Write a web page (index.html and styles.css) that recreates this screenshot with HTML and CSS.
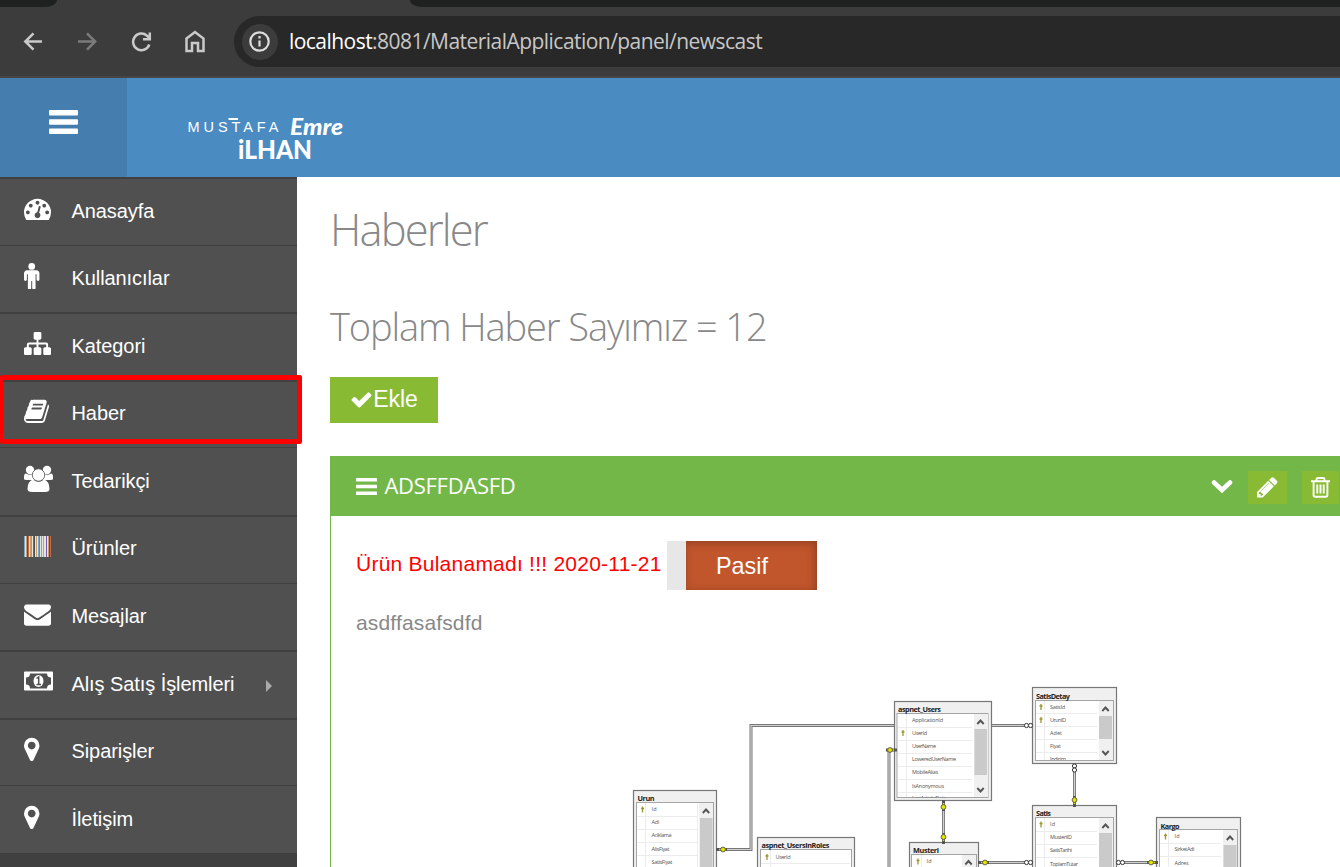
FILE: index.html
```html
<!DOCTYPE html>
<html lang="tr">
<head>
<meta charset="utf-8">
<title>Haberler</title>
<link rel="stylesheet" href="styles.css">
</head>
<body>
<div class="browser">
  <div class="tabstrip"><div class="tab-left"></div><div class="tab-right"></div></div>
  <div class="toolbar">
    <svg class="nav-icons" width="212" height="32" viewBox="0 26 212 32" fill="none" stroke="#c9c9c9" stroke-width="2.500">
      <path d="M42 41.500H26M33.500 33.300L25.300 41.500L33.500 49.700"/>
      <path stroke="#7b7b7b" d="M78 41.500H94M87 33.300L95.200 41.500L87 49.700"/>
      <path d="M149.300 44.500A8.300 8.300 0 1 1 147 35.700L149.500 38.500M149.800 32.500V39.200H143"/>
      <path d="M186.500 38.500L195 32L203.500 38.500V51H198V43H192V51H186.500Z"/>
    </svg>
    <div class="address">
      <span class="info"><svg width="36" height="36" viewBox="0 0 36 36"><circle cx="17.500" cy="17.500" r="9.200" fill="none" stroke="#dedede" stroke-width="2.200"/><path d="M17.500 16.500V22.500M17.500 12V14.500" stroke="#dedede" stroke-width="2.200"/></svg></span>
      <span class="url"><b>localhost</b>:8081/MaterialApplication/panel/newscast</span>
    </div>
  </div>
</div>
<header class="header">
  <div class="menu-toggle"><svg width="29" height="24" viewBox="0 0 29 24" fill="#fff"><rect width="29" height="5.400" rx="1"/><rect y="9.300" width="29" height="5.400" rx="1"/><rect y="18.600" width="29" height="5.400" rx="1"/></svg></div>
  <svg class="logo" width="175" height="60" viewBox="180 105 175 60" fill="#fff">
    <text class="logo-thin" x="187.500" y="132" textLength="91">MUSTAFA</text>
    <rect x="228.500" y="118" width="9.500" height="2"/>
    <text class="logo-script" x="290" y="134.500" textLength="53" lengthAdjust="spacingAndGlyphs">Emre</text>
    <text class="logo-bold" x="238" y="158.500" textLength="74" lengthAdjust="spacingAndGlyphs">iLHAN</text>
  </svg>
</header>
<div class="page">
  <nav class="sidebar">
    <a class="item thick"><svg viewBox="0 0 1792 1792"><path d="M384 1152q0-53-37.500-90.500t-90.500-37.500-90.500 37.500-37.500 90.500 37.500 90.500 90.500 37.500 90.500-37.500 37.500-90.500zm192-448q0-53-37.500-90.500t-90.500-37.500-90.500 37.500-37.500 90.500 37.500 90.500 90.500 37.500 90.500-37.500 37.500-90.500zm428 481l101-382q6-26-7.500-48.500t-38.500-29.500-48 6.500-30 39.500l-101 382q-60 5-107 43.500t-63 98.500q-20 77 20 146t117 89 146-20 89-117q16-60-6-117t-72-91zm660-33q0-53-37.500-90.500t-90.500-37.500-90.500 37.500-37.500 90.500 37.500 90.500 90.500 37.500 90.500-37.500 37.500-90.500zm-640-640q0-53-37.500-90.500t-90.500-37.500-90.500 37.500-37.500 90.500 37.500 90.500 90.500 37.500 90.500-37.500 37.500-90.500zm448 192q0-53-37.500-90.500t-90.500-37.500-90.500 37.500-37.500 90.500 37.500 90.500 90.500 37.500 90.500-37.500 37.500-90.500zm320 448q0 261-141 483-19 29-54 29h-1402q-35 0-54-29-141-221-141-483 0-182 71-348t191-286 286-191 348-71 348 71 286 191 191 286 71 348z"/></svg><span>Anasayfa</span></a>
    <a class="item"><svg viewBox="384 -70 1792 1792"><circle cx="896" cy="224" r="224"/><path d="M1408 672v416q0 40-28 68t-68 28-68-28-28-68v-352h-64v912q0 46-33 79t-79 33-79-33-33-79v-464h-64v464q0 46-33 79t-79 33-79-33-33-79v-912h-64v352q0 40-28 68t-68 28-68-28-28-68v-416q0-80 56-136t136-56h640q80 0 136 56t56 136z"/></svg><span>Kullanıcılar</span></a>
    <a class="item thick"><svg viewBox="0 0 1792 1792"><path d="M1792 1248v320q0 40-28 68t-68 28h-320q-40 0-68-28t-28-68v-320q0-40 28-68t68-28h96v-192h-512v192h96q40 0 68 28t28 68v320q0 40-28 68t-68 28h-320q-40 0-68-28t-28-68v-320q0-40 28-68t68-28h96v-192h-512v192h96q40 0 68 28t28 68v320q0 40-28 68t-68 28h-320q-40 0-68-28t-28-68v-320q0-40 28-68t68-28h96v-192q0-52 38-90t90-38h512v-192h-96q-40 0-68-28t-28-68v-320q0-40 28-68t68-28h320q40 0 68 28t28 68v320q0 40-28 68t-68 28h-96v192h512q52 0 90 38t38 90v192h96q40 0 68 28t28 68z"/></svg><span>Kategori</span></a>
    <a class="item thick active"><svg viewBox="64 -60 1792 1792"><path d="M1703 478q40 57 18 129l-275 906q-19 64-76.500 107.500t-122.500 43.500h-923q-77 0-148.500-53.500t-99.500-131.500q-24-67-2-127 0-4 3-27t4-37q1-8-3-21.500t-3-19.500q2-11 8-21t16.500-23.500 16.500-23.500q23-38 45-91.500t30-91.500q3-10 .5-30t-.5-28q3-11 17-28t17-23q21-36 42-92t25-90q1-9-2.500-32t.5-28q4-13 22-30.500t22-22.500q19-26 42.500-84.500t27.500-96.500q1-8-3-25.500t-2-26.500q2-8 9-18t18-23 17-21q8-12 16.500-30.500t15-35 16-36 19.500-32 26.500-23.500 36-11.500 47.500 5.500l-1 3q38-9 51-9h761q74 0 114 56t18 130l-274 906q-36 119-71.500 153.500t-128.500 34.500h-869q-27 0-38 15-11 16-1 43 24 70 144 70h923q29 0 56-15.500t35-41.500l300-987q7-22 5-57 38 15 59 43zm-1064 2q-4 13 2 22.500t20 9.500h608q13 0 25.500-9.500t16.500-22.500l21-64q4-13-2-22.500t-20-9.500h-608q-13 0-25.500 9.500t-16.500 22.500zm-83 256q-4 13 2 22.500t20 9.500h608q13 0 25.500-9.500t16.500-22.500l21-64q4-13-2-22.500t-20-9.500h-608q-13 0-25.500 9.500t-16.500 22.500z"/></svg><span>Haber</span></a>
    <a class="item"><svg class="wide" viewBox="0 0 29 27"><circle cx="6" cy="5" r="4.200"/><circle cx="23" cy="5" r="4.200"/><path d="M0 14V12Q0 8.500 2 8.500Q6 11 9 8.500L11 15H3Q0 15 0 14ZM29 14V12Q29 8.500 27 8.500Q23 11 20 8.500L18 15H26Q29 15 29 14Z"/><path d="M9 14.500Q14.500 19 20 14.500Q25.500 16 25.500 24Q25.500 27 21 27H8Q3.500 27 3.500 24Q3.500 16 9 14.500Z"/><circle cx="14.500" cy="10" r="6.200" stroke="#505050" stroke-width=".8"/></svg><span>Tedarikçi</span></a>
    <a class="item thick"><svg viewBox="0 -.500 27 27" shape-rendering="crispEdges"><path fill="#e4e4da" d="M0 3h27v21H0z"/><path fill="#505050" d="M10 3h1v21h-1zM25 3h1v21h-1zM3 3h1v21H3z"/><path fill="#c8a06a" d="M2 3h1v21H2zM6 3h1v21H6zM12 3h1v21h-1zM19 3h1v21h-1zM24 3h1v21h-1z"/><path fill="#c56a4c" d="M4 3h1v21H4zM15 3h1v21h-1zM26 3h1v21h-1z"/><path fill="#7659aa" d="M9 3h1v21H9zM22 3h1v21h-1z"/><path fill="#75aacd" d="M0 3h1v21H0zM7 3h1v21H7zM14 3h1v21h-1zM17 3h1v21h-1z"/></svg><span>Ürünler</span></a>
    <a class="item"><svg viewBox="0 -50 1792 1792"><path d="M1792 710v794q0 66-47 113t-113 47h-1472q-66 0-113-47t-47-113v-794q44 49 101 87 362 246 497 345 57 42 92.500 65.500t94.500 48 110 24.500h2q51 0 110-24.500t94.500-48 92.500-65.500q170-123 498-345 57-39 100-87zm0-294q0 79-49 151t-122 123q-376 261-468 325-10 7-42.500 31t-54 38.500-52 32.500-57.500 27-50 9h-2q-23 0-50-9t-57.500-27-52-32.500-54-38.500-42.500-31q-91-64-262-182.500t-205-142.500q-62-42-117-115.500t-55-136.500q0-78 41.500-130t118.500-52h1472q65 0 112.500 47t47.500 113z"/></svg><span>Mesajlar</span></a>
    <a class="item thick"><svg class="wide" viewBox="0 -.500 29 27"><path fill-rule="evenodd" d="M0 4Q0 3 1 3H28Q29 3 29 4V21Q29 22 28 22H1Q0 22 0 21ZM6 5Q6 9 2 9V16Q6 16 6 20H23Q23 16 27 16V9Q23 9 23 5Z"/><ellipse cx="14.500" cy="12.500" rx="5" ry="6"/><path d="M12.500 10L14.700 8.500V16M12.500 16H17" fill="none" stroke="#505050" stroke-width="1.500"/></svg><span>Alış Satış İşlemleri</span><i class="arrow"></i></a>
    <a class="item thick"><svg viewBox="384 -60 1792 1792"><path d="M1152 640q0-106-75-181t-181-75-181 75-75 181 75 181 181 75 181-75 75-181zm256 0q0 109-33 179l-364 774q-16 33-47.500 52t-67.500 19-67.500-19-46.500-52l-365-774q-33-70-33-179 0-212 150-362t362-150 362 150 150 362z"/></svg><span>Siparişler</span></a>
    <a class="item"><svg viewBox="384 -60 1792 1792"><path d="M1152 640q0-106-75-181t-181-75-181 75-75 181 75 181 181 75 181-75 75-181zm256 0q0 109-33 179l-364 774q-16 33-47.500 52t-67.500 19-67.500-19-46.500-52l-365-774q-33-70-33-179 0-212 150-362t362-150 362 150 150 362z"/></svg><span>İletişim</span></a>
  </nav>
  <main class="main">
    <h1>Haberler</h1>
    <h2>Toplam Haber Sayımız = 12</h2>
    <button class="add"><svg width="23" height="23" viewBox="60 0 1672 1792"><path fill="#fff" d="M1671 566q0 40-28 68l-724 724-136 136q-28 28-68 28t-68-28l-136-136-362-362q-28-28-28-68t28-68l136-136q28-28 68-28t68 28l294 295 656-657q28-28 68-28t68 28l136 136q28 28 28 68z"/></svg>Ekle</button>
    <section class="widget">
      <div class="widget-head">
        <svg width="21" height="17" viewBox="0 0 21 17" fill="#fff"><rect width="21" height="3.600" rx=".6"/><rect y="6.700" width="21" height="3.600" rx=".6"/><rect y="13.400" width="21" height="3.600" rx=".6"/></svg>
        <h4>ADSFFDASFD</h4>
        <svg class="chevron" width="22" height="15" viewBox="0 0 22 15"><path d="M3 3.500L11 11L19 3.500" fill="none" stroke="#fff" stroke-width="4.600" stroke-linecap="round"/></svg>
        <span class="tool"><svg width="24" height="24" viewBox="90 60 1700 1792"><path fill="#fff" d="M491 1536l91-91-235-235-91 91v107h128v128h107zm523-928q0-22-22-22-10 0-17 7l-542 542q-7 7-7 17 0 22 22 22 10 0 17-7l542-542q7-7 7-17zm-54-192l416 416-832 832h-416v-416zm683 96q0 53-37 90l-166 166-416-416 166-165q36-38 90-38 53 0 91 38l235 234q37 39 37 91z"/></svg></span>
        <span class="tool trash"><svg width="19" height="21" viewBox="0 0 19 21" fill="none" stroke="#fff" stroke-width="1.900"><path d="M0 4.300H19M5.500 4V2.500Q5.500 1 7 1H12Q13.500 1 13.500 2.500V4M2.600 4.300V18Q2.600 19.800 4.300 19.800H14.700Q16.400 19.800 16.400 18V4.300M6.300 7.500V16.500M9.500 7.500V16.500M12.700 7.500V16.500"/></svg></span>
      </div>
      <div class="widget-body">
        <div class="status"><span class="warn">Ürün Bulanamadı !!! 2020-11-21</span><span class="switch"><span>Pasif</span></span></div>
        <p>asdffasafsdfd</p>
        <svg class="diagram" width="640" height="187" viewBox="620 680 640 187">
          <defs>
            <g id="key"><path d="M0 0H-2M0 0H9" stroke="#555" stroke-width="3"/><path d="M1 0H8" stroke="#dddd20" stroke-width="1.500"/><circle cx="5" r="2.400" fill="#e5e500" stroke="#444" stroke-width=".8"/></g>
            <g id="many" fill="#fff" stroke="#333"><circle cx="-2" r="2.100"/><circle cx="2" r="2.100"/></g>
            <path id="pk" d="M0-3V3M-1.500-1H1.500" stroke="#99992c" stroke-width="1.300"/>
            <path id="up" d="M-3.200 2L0-1.500L3.200 2" fill="none" stroke="#555" stroke-width="1.900"/>
          </defs>
          <g fill="none" stroke="#777" stroke-width="3"><path d="M718 849.500H751V725.500H894M992 725.500H1026M889 867V750M943.500 802V842M1074.500 764V806M980 862.500H1032M1117 862.500H1156"/></g>
          <g fill="none" stroke="#d0d0d0" stroke-width="1.200"><path d="M718 849.500H751V725.500H894M992 725.500H1026M889 867V750M943.500 802V842M1074.500 764V806M980 862.500H1032M1117 862.500H1156"/></g>
          <g fill="#f0f0f0" stroke="#777" stroke-width="1.200">
            <rect x="633.500" y="790.500" width="83" height="90"/><rect x="757.500" y="837.500" width="97" height="60"/><rect x="894.500" y="701.500" width="97" height="99"/><rect x="909.500" y="842.500" width="69" height="60"/><rect x="1032.500" y="687.500" width="84" height="76"/><rect x="1032.500" y="805.500" width="84" height="80"/><rect x="1156.500" y="817.500" width="84" height="80"/>
          </g>
          <g fill="#fff" stroke="#a5a5a5">
            <rect x="636.500" y="802.500" width="77" height="80"/><rect x="760.500" y="849.500" width="91" height="50"/><rect x="897" y="713.500" width="91" height="84"/><rect x="911.500" y="854.500" width="65" height="50"/><rect x="1035.500" y="700.500" width="78" height="60"/><rect x="1035.500" y="817.500" width="78" height="70"/><rect x="1159.500" y="829.500" width="78" height="70"/>
          </g>
          <path stroke="#ececec" d="M645.500 803V867M637 816.500H697M637 829.500H697M637 842.500H697M637 855.500H697M697.500 803V867M770.500 850V867M761 863.500H850M906.500 714V797M898 727.500H972M898 740.500H972M898 753.500H972M898 766.500H972M898 779.500H972M898 792.500H972M921.500 855V867M1044.500 701V760M1036 713.500H1097M1036 726.500H1097M1036 739.500H1097M1036 752.500H1097M1044.500 818V867M1036 831.500H1097M1036 844.500H1097M1036 857.500H1097M1168.500 830V867M1160 843.500H1221M1160 856.500H1221"/>
          <g fill="#f0f0f0"><rect x="699" y="803" width="14" height="64"/><rect x="974" y="714" width="14" height="83"/><rect x="962" y="855" width="14" height="12"/><rect x="1099" y="701" width="14" height="59"/><rect x="1099" y="818" width="14" height="49"/><rect x="1223" y="830" width="14" height="37"/></g>
          <g fill="#cacaca"><rect x="700" y="818" width="12.500" height="49"/><rect x="974.500" y="729" width="12.500" height="46"/><rect x="1099" y="716" width="13" height="23"/><rect x="1099" y="833" width="13" height="34"/><rect x="1223.500" y="845" width="13" height="22"/></g>
          <use href="#up" x="706" y="811"/><use href="#up" x="980.500" y="722"/><use href="#up" x="968.500" y="862.500"/><use href="#up" x="1105.500" y="709"/><use href="#up" x="1105.500" y="826"/><use href="#up" x="1230" y="838"/>
          <use href="#up" transform="translate(980.500 790) scale(1 -1)"/><use href="#up" transform="translate(1105.500 753) scale(1 -1)"/>
          <use href="#pk" x="642.500" y="809.500"/><use href="#pk" x="767" y="857"/><use href="#pk" x="903" y="733"/><use href="#pk" x="918" y="861.500"/><use href="#pk" x="1041" y="707"/><use href="#pk" x="1041" y="720"/><use href="#pk" x="1041" y="824.500"/><use href="#pk" x="1165.500" y="836.500"/>
          <use href="#key" x="718" y="849.500"/><use href="#key" transform="translate(895 750) scale(-1 1)"/><use href="#key" transform="translate(943.500 802) rotate(90)"/><use href="#key" transform="translate(943.500 842) rotate(-90)"/><use href="#key" x="980" y="862.500"/><use href="#key" transform="translate(1074.500 805) rotate(-90)"/><use href="#key" transform="translate(1156 862.500) scale(-1 1)"/>
          <use href="#many" x="1028.500" y="725.500"/><use href="#many" x="1028.500" y="862.500"/><use href="#many" x="1120.500" y="862.500"/><use href="#many" transform="translate(1074.500 768) rotate(90)"/>
          <g class="table-name">
            <text x="637.500" y="801" textLength="17">Urun</text><text x="761.500" y="848" textLength="68">aspnet_UsersInRoles</text><text x="898" y="711.500" textLength="43">aspnet_Users</text><text x="913" y="853" textLength="26">Musteri</text><text x="1036" y="698.500" textLength="34">SatisDetay</text><text x="1036" y="816" textLength="15">Satis</text><text x="1160.500" y="828.500" textLength="19">Kargo</text>
          </g>
          <g class="columns">
            <text x="651.500" y="811" textLength="5">Id</text><text x="651.500" y="824" textLength="8">Adi</text><text x="651.500" y="837" textLength="20">Aciklama</text><text x="651.500" y="850.500" textLength="18">AlisFiyat</text><text x="651.500" y="863.500" textLength="21">SatisFiyat</text>
            <text x="775.500" y="858.500" textLength="15">UserId</text>
            <text x="912" y="722" textLength="31">ApplicationId</text><text x="912" y="735" textLength="15">UserId</text><text x="912" y="748" textLength="24">UserName</text><text x="912" y="761" textLength="44">LoweredUserName</text><text x="912" y="774" textLength="26">MobileAlias</text><text x="912" y="787.500" textLength="32">IsAnonymous</text>
            <svg x="897" y="794" width="76" height="3.500" viewBox="897 794 76 3.500"><text x="912" y="800" textLength="34">LastActivityDate</text></svg>
            <text x="926.500" y="863" textLength="5">Id</text>
            <text x="1050" y="709" textLength="15">SatisId</text><text x="1050" y="722" textLength="16">UrunID</text><text x="1050" y="735" textLength="12">Adet</text><text x="1050" y="748" textLength="11">Fiyat</text><svg x="1036" y="755" width="60" height="5" viewBox="1036 755 60 5"><text x="1050" y="761" textLength="16">Indirim</text></svg>
            <text x="1050" y="826" textLength="5">Id</text><text x="1050" y="839" textLength="22">MusteriID</text><text x="1050" y="852" textLength="22">SatisTarihi</text><text x="1050" y="865.500" textLength="28">ToplamTutar</text>
            <text x="1174.500" y="838" textLength="5">Id</text><text x="1174.500" y="851" textLength="20">SirketAdi</text><text x="1174.500" y="864.500" textLength="14">Adres</text>
          </g>
        </svg>
      </div>
    </section>
  </main>
</div>
</body>
</html>
```
FILE: styles.css
```css
*, *::before, *::after { box-sizing: border-box; }
body { margin: 0; width: 1340px; height: 867px; overflow: hidden; background: #fff; font-family: "Liberation Sans", Arial, sans-serif; }
svg { display: block; flex: none; }
.browser { height: 78px; background: #3c3c3c; border-bottom: 2px solid #474645; }
.tabstrip { height: 7px; display: flex; justify-content: space-between; }
.tab-left { width: 57px; background: #1f2120; border-bottom-right-radius: 12px 7px; }
.tab-right { width: 930px; background: #1f2120; border-bottom-left-radius: 12px 7px; }
.toolbar { height: 69px; display: flex; align-items: center; }
.nav-icons { margin-right: 22px; }
.address { flex: 1; height: 51px; background: #282828; border-radius: 26px 0 0 26px; display: flex; align-items: center; padding-left: 8px; }
.info { width: 36px; height: 36px; border-radius: 50%; background: #3c3c3c; margin-right: 11px; }
.url { font: 21px/30px "Open Sans", "Noto Sans", sans-serif; color: #c7c7c7; white-space: nowrap; letter-spacing: -0.540px; margin-top: -2px; }
.url b { font-weight: 400; color: #fff; }
.header { height: 99px; background: #4a8bc2; display: flex; }
.menu-toggle { width: 127px; background: #447dae; padding: 32px 49px; }
.logo { margin: 27px 0 0 53px; }
.logo-thin { font: 14.500px "Liberation Sans", sans-serif; }
.logo-script { font: italic 900 23px Lato, sans-serif; }
.logo-bold { font: 900 27px Lato, sans-serif; }
.page { height: 690px; display: flex; }
.sidebar { width: 297px; background: #404040; flex: none; }
.item { position: relative; height: 67.6px; display: flex; align-items: flex-start; padding: 16.500px 0 0 24px; background: #505050; border-top: 1px solid #404040; color: #fff; font-size: 20px; }
.item.thick { border-top-width: 2px; padding-top: 15.500px; }
.item svg { width: 27px; height: 27px; fill: #fff; margin-right: 20.500px; }
.item svg.wide { width: 29px; margin-right: 18.500px; }
.item span { line-height: 33px; white-space: nowrap; letter-spacing: -0.080px; }
.active::after { content: ""; position: absolute; left: 0; top: -7px; width: 302px; height: 69px; border: 5px solid #f00; border-left-width: 3px; border-radius: 2px; z-index: 2; }
.arrow { border: 6px solid transparent; border-left-color: #aaa; border-right: 0; margin: 12px 0 0 32px; }
.main { flex: 1; min-width: 0; padding: 26px 0 0 33px; color: #888; }
h1, h2, h4, p { margin: 0; font-weight: 300; white-space: nowrap; }
h1 { font: 300 43.500px/54px "Open Sans", sans-serif; letter-spacing: -1.850px; }
h2 { font: 300 38px/50px "Open Sans", sans-serif; margin-top: 44px; letter-spacing: -1.100px; }
.add { margin-top: 26px; width: 108px; height: 46px; border: 0; padding: 0 0 2px; background: #8b3; color: #fff; display: flex; align-items: center; justify-content: center; font: 23px "Liberation Sans", Arial, sans-serif; }
.widget { margin-top: 33px; border-left: 1px solid #74b749; height: 420px; }
.widget-head { height: 60px; background: #74b749; display: flex; align-items: center; padding-left: 24.500px; }
h4 { color: #fff; font: 400 22px/30px "Open Sans", sans-serif; margin: -2px 0 0 8px; letter-spacing: -.3px; flex: 1; }
.chevron { margin-right: 15px; }
.tool { width: 39px; height: 33px; background: #8b3; display: flex; align-items: center; justify-content: center; margin: 3px 15px 0 0; }
.tool.trash { width: 37px; margin-right: 1px; }
.widget-body { padding: 25px 0 0 25px; font-size: 21px; }
.status { display: flex; height: 49px; }
.warn { color: #f00; width: 311px; line-height: 46px; white-space: nowrap; letter-spacing: .24px; }
.switch { width: 150px; background: #e7e7e7; padding-left: 19px; color: #fff; font-size: 23.400px; line-height: 50px; }
.switch span { display: block; height: 49px; background: #c1552c; padding-left: 30px; box-shadow: inset -2px 2px 8px rgba(0,0,0,.25); }
p { line-height: 30px; margin-top: 18px; font-weight: 400; letter-spacing: .150px; }
.diagram { margin: 42px 0 0 264px; }
.table-name { font: 700 7.300px "Open Sans", sans-serif; fill: #222; }
.columns { font: 5.500px "Open Sans", sans-serif; fill: #555; }
```
